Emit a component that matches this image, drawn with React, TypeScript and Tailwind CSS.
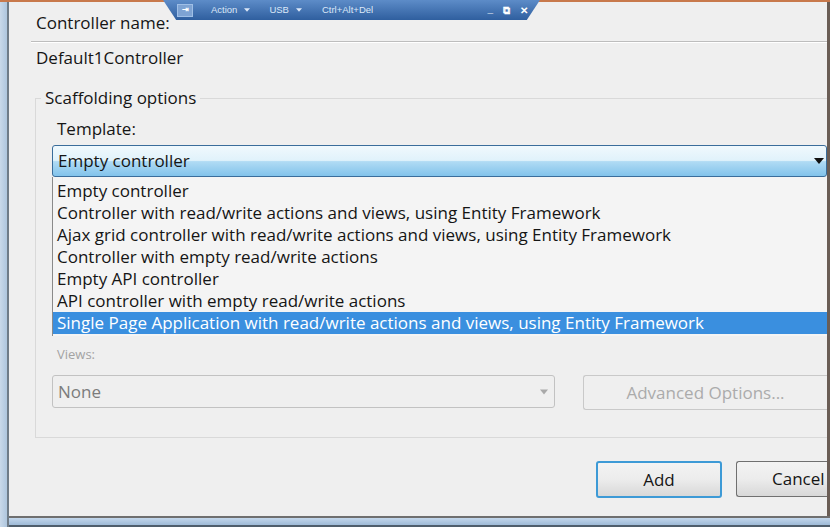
const templates = [
  "Empty controller",
  "Controller with read/write actions and views, using Entity Framework",
  "Ajax grid controller with read/write actions and views, using Entity Framework",
  "Controller with empty read/write actions",
  "Empty API controller",
  "API controller with empty read/write actions",
  "Single Page Application with read/write actions and views, using Entity Framework",
];

function Caret({ className }: { className: string }) {
  return (
    <svg width="10" height="6" viewBox="0 0 10 6" className={className}>
      <path d="M0 0 L10 0 L5 6 Z" fill="currentColor" />
    </svg>
  );
}

function RemoteBar() {
  // barre de contrôle de la VM, posée par-dessus la fenêtre
  return (
    <div className="absolute left-[163px] top-0 h-[20px] w-[377px] bg-gradient-to-b from-[#5d8cc8] to-[#2f5f9f] [clip-path:polygon(0_0,100%_0,96.5%_100%,3.5%_100%)] flex items-center text-[9.5px] text-[#dce8f8] font-['Liberation_Sans',sans-serif]">
      <div className="ml-[14px] w-[16px] h-[13px] bg-[#7ea3d3] border border-[#9fbfe6] flex items-center justify-center text-white text-[8px] font-bold">
        ⇥
      </div>
      <span className="ml-[18px] flex items-center gap-[7px]">
        Action <Caret className="w-[6px] h-[4px]" />
      </span>
      <span className="ml-[19px] flex items-center gap-[7px]">
        USB <Caret className="w-[6px] h-[4px]" />
      </span>
      <span className="ml-[20px]">Ctrl+Alt+Del</span>
      <span className="ml-auto mr-[12px] flex items-center gap-[10px] text-white font-bold text-[10px]">
        <span className="-mt-[4px]">_</span>
        <span>⧉</span>
        <span>✕</span>
      </span>
    </div>
  );
}

export default function App() {
  return (
    <div className="relative w-[830px] h-[527px] overflow-hidden bg-[#efefef] font-['Open_Sans',sans-serif] text-[#151515]">
      <div className="h-[2px] bg-[#c8794c]" />
      <div className="flex h-[525px]">
        <div className="w-[9px] bg-gradient-to-r from-[#c9d9ea] to-[#aec6de] border-r-2 border-[#6f7c88]" />
        <div className="flex-1 flex flex-col">
          <div className="flex-1 flex flex-col pl-[22px] border-r-[3px] border-[#6a5d55]">
            <div className="h-[39px] flex items-center pl-[5px] pt-[3px] text-[17px]">
              Controller name:
            </div>
            <div className="h-[2px] bg-[#bdbdbd] border-b border-white" />
            <div className="h-[30px] flex items-center pl-[5px] text-[17px]">
              Default1Controller
            </div>

            {/* groupe "Scaffolding options" */}
            <div className="mt-[25px] ml-[4px] h-[340px] border-l border-t border-b border-[#d9d9d9] flex flex-col relative">
              <span className="absolute -top-[13px] left-[5px] px-[4px] bg-[#efefef] text-[17px] leading-[24px]">
                Scaffolding options
              </span>
              <div className="mt-[19px] ml-[21px] text-[17px] leading-[22px]">Template:</div>
              <div className="mt-[5px] ml-[16px] flex flex-col">
                <div className="h-[32px] rounded-[3px] border border-[#3a6d9b] bg-[linear-gradient(#f0f9fd_0%,#e0f2fb_48%,#b0dbf4_52%,#82c3eb_100%)] flex items-center pl-[5px] pr-[2px] text-[17px]">
                  <span className="flex-1">Empty controller</span>
                  <Caret className="text-[#111]" />
                </div>
                <div className="h-[159px] border-l border-[#8a8a8a] bg-[#f4f4f4] pt-[3px] flex flex-col">
                  {templates.map((t, i) => (
                    <div
                      key={t}
                      className={`h-[22px] flex items-center pl-[4px] text-[17px] ${
                        i === templates.length - 1 ? "bg-[#3a8fdf] text-white" : ""
                      }`}
                    >
                      {t}
                    </div>
                  ))}
                </div>
              </div>
              <div className="mt-[7px] ml-[21px] text-[13px] text-[#a3a3a3] leading-[22px]">Views:</div>
              <div className="mt-[10px] ml-[16px] flex items-start gap-[28px]">
                <div className="w-[503px] h-[33px] rounded-[3px] border border-[#c2c2c2] flex items-center pl-[5px] pr-[6px] text-[17px] text-[#7c7c7c]">
                  <span className="flex-1">None</span>
                  <Caret className="text-[#a9a9a9] w-[8px]" />
                </div>
                <div className="flex-1 h-[35px] rounded-l-[3px] border border-r-0 border-[#c9c9c9] flex items-center justify-center text-[17px] text-[#ababab]">
                  Advanced Options...
                </div>
              </div>
            </div>

            <div className="mt-[23px] flex justify-end gap-[14px]">
              <button className="w-[126px] h-[37px] rounded-[3px] border-2 border-[#3d9ad6] bg-gradient-to-b from-[#f3f3f3] via-[#ececec] to-[#d8d8d8] text-[17px]">
                Add
              </button>
              <button className="w-[91px] h-[36px] rounded-l-[3px] border border-r-0 border-[#707070] bg-gradient-to-b from-[#f3f3f3] via-[#ececec] to-[#d8d8d8] text-[17px] pl-[35px] text-left whitespace-nowrap overflow-hidden">
                Cancel
              </button>
            </div>
          </div>
          <div className="h-[2px] bg-[#6f6f6f]" />
          <div className="h-[9px] bg-gradient-to-b from-[#c3d7ec] to-[#9fbbd8] border-b-2 border-[#4f5e6c]" />
        </div>
      </div>
      <RemoteBar />
    </div>
  );
}
